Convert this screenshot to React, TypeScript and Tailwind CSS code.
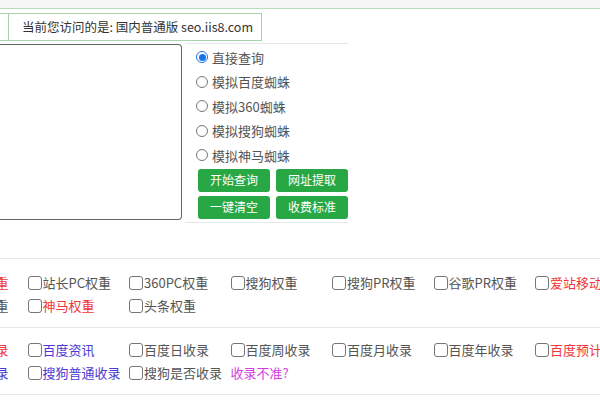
import React from 'react';

type Item = { label: string; color?: string; box?: boolean };

const font = { fontFamily: '"Microsoft YaHei", "Noto Sans CJK SC", "Noto Sans", sans-serif' };

const weightRows: Item[][] = [
  [
    { label: '重', color: 'text-[#f0363a]', box: false },
    { label: '站长PC权重' },
    { label: '360PC权重' },
    { label: '搜狗权重' },
    { label: '搜狗PR权重' },
    { label: '谷歌PR权重' },
    { label: '爱站移动权重', color: 'text-[#f0363a]' },
  ],
  [
    { label: '权重', box: false },
    { label: '神马权重', color: 'text-[#f0363a]' },
    { label: '头条权重' },
  ],
];

const indexRows: Item[][] = [
  [
    { label: '收录', color: 'text-[#f0363a]', box: false },
    { label: '百度资讯', color: 'text-[#4b39d6]' },
    { label: '百度日收录' },
    { label: '百度周收录' },
    { label: '百度月收录' },
    { label: '百度年收录' },
    { label: '百度预计流量', color: 'text-[#f0363a]' },
  ],
  [
    { label: '普通收录', color: 'text-[#4b39d6]', box: false },
    { label: '搜狗普通收录', color: 'text-[#4b39d6]' },
    { label: '搜狗是否收录' },
    { label: '收录不准?', color: 'text-[#d43ee0]', box: false },
  ],
];

const radios = ['直接查询', '模拟百度蜘蛛', '模拟360蜘蛛', '模拟搜狗蜘蛛', '模拟神马蜘蛛'];

function CheckRow({ items }: { items: Item[] }) {
  return (
    <div className="flex h-[23px] items-center">
      {items.map((it, i) => (
        <div
          key={i}
          className={`flex w-[101.5px] shrink-0 items-center whitespace-nowrap ${i === 0 ? 'justify-end pr-[19px]' : ''}`}
        >
          {it.box !== false && (
            <span className="mr-px h-[14px] w-[14px] shrink-0 rounded-[3px] border border-[#767676] bg-white" />
          )}
          <span className={`text-[13px] ${it.color ?? 'text-[#555]'}`}>{it.label}</span>
        </div>
      ))}
    </div>
  );
}

function Btn({ children }: { children: React.ReactNode }) {
  return (
    <button className="h-[23px] w-[72px] rounded-[3px] bg-[#28a745] text-[12px] text-white">{children}</button>
  );
}

export default function App() {
  return (
    <div className="h-[400px] w-[600px] overflow-hidden bg-white" style={font}>
      <div className="h-[8px] bg-[#f6f6f6]" />
      <div className="h-px bg-[#b9dcb9]" />
      <div className="mt-[4px] flex h-[28px]">
        <div className="w-[9px] border-y border-r border-[#a9d3a9]" />
        <div className="flex w-[253px] items-center whitespace-nowrap border-y border-r border-[#a9d3a9] pl-[13px] text-[12.5px] text-[#333]">
          当前您访问的是: 国内普通版 seo.iis8.com
        </div>
      </div>

      <div className="mt-[2px] flex">
        <div className="mt-px h-[176px] w-[182px] rounded-r-[4px] border-y border-r border-[#666]" />
        <div className="ml-[3px] flex h-[180px] w-[163px] flex-col border-y border-[#e6e6e6] pl-[11px]">
          <div className="mt-[1px] flex flex-col">
            {radios.map((r, i) => (
              <label key={r} className="flex h-[24.5px] items-center text-[13px] text-[#555]">
                <span
                  className={`mr-[4px] flex h-[12px] w-[12px] items-center justify-center rounded-full border ${
                    i === 0 ? 'border-[#1a73e8] bg-white' : 'border-[#777] bg-white'
                  }`}
                >
                  {i === 0 && <span className="h-[7px] w-[7px] rounded-full bg-[#1a73e8]" />}
                </span>
                {r}
              </label>
            ))}
          </div>
          <div className="ml-[2px] mt-[1px] grid grid-cols-[72px_72px] gap-x-[6px] gap-y-[4px]">
            <Btn>开始查询</Btn>
            <Btn>网址提取</Btn>
            <Btn>一键清空</Btn>
            <Btn>收费标准</Btn>
          </div>
        </div>
      </div>

      <div className="mt-[35px] border-t border-[#e8e8e8]">
        <div className="ml-[-74px] pt-[12px] pb-[10px]">
          {weightRows.map((row, i) => (
            <CheckRow key={i} items={row} />
          ))}
        </div>
      </div>
      <div className="border-t border-[#e8e8e8]">
        <div className="ml-[-74px] pt-[10px] pb-[10px]">
          {indexRows.map((row, i) => (
            <CheckRow key={i} items={row} />
          ))}
        </div>
      </div>
      <div className="border-t border-[#e8e8e8]" />
    </div>
  );
}
